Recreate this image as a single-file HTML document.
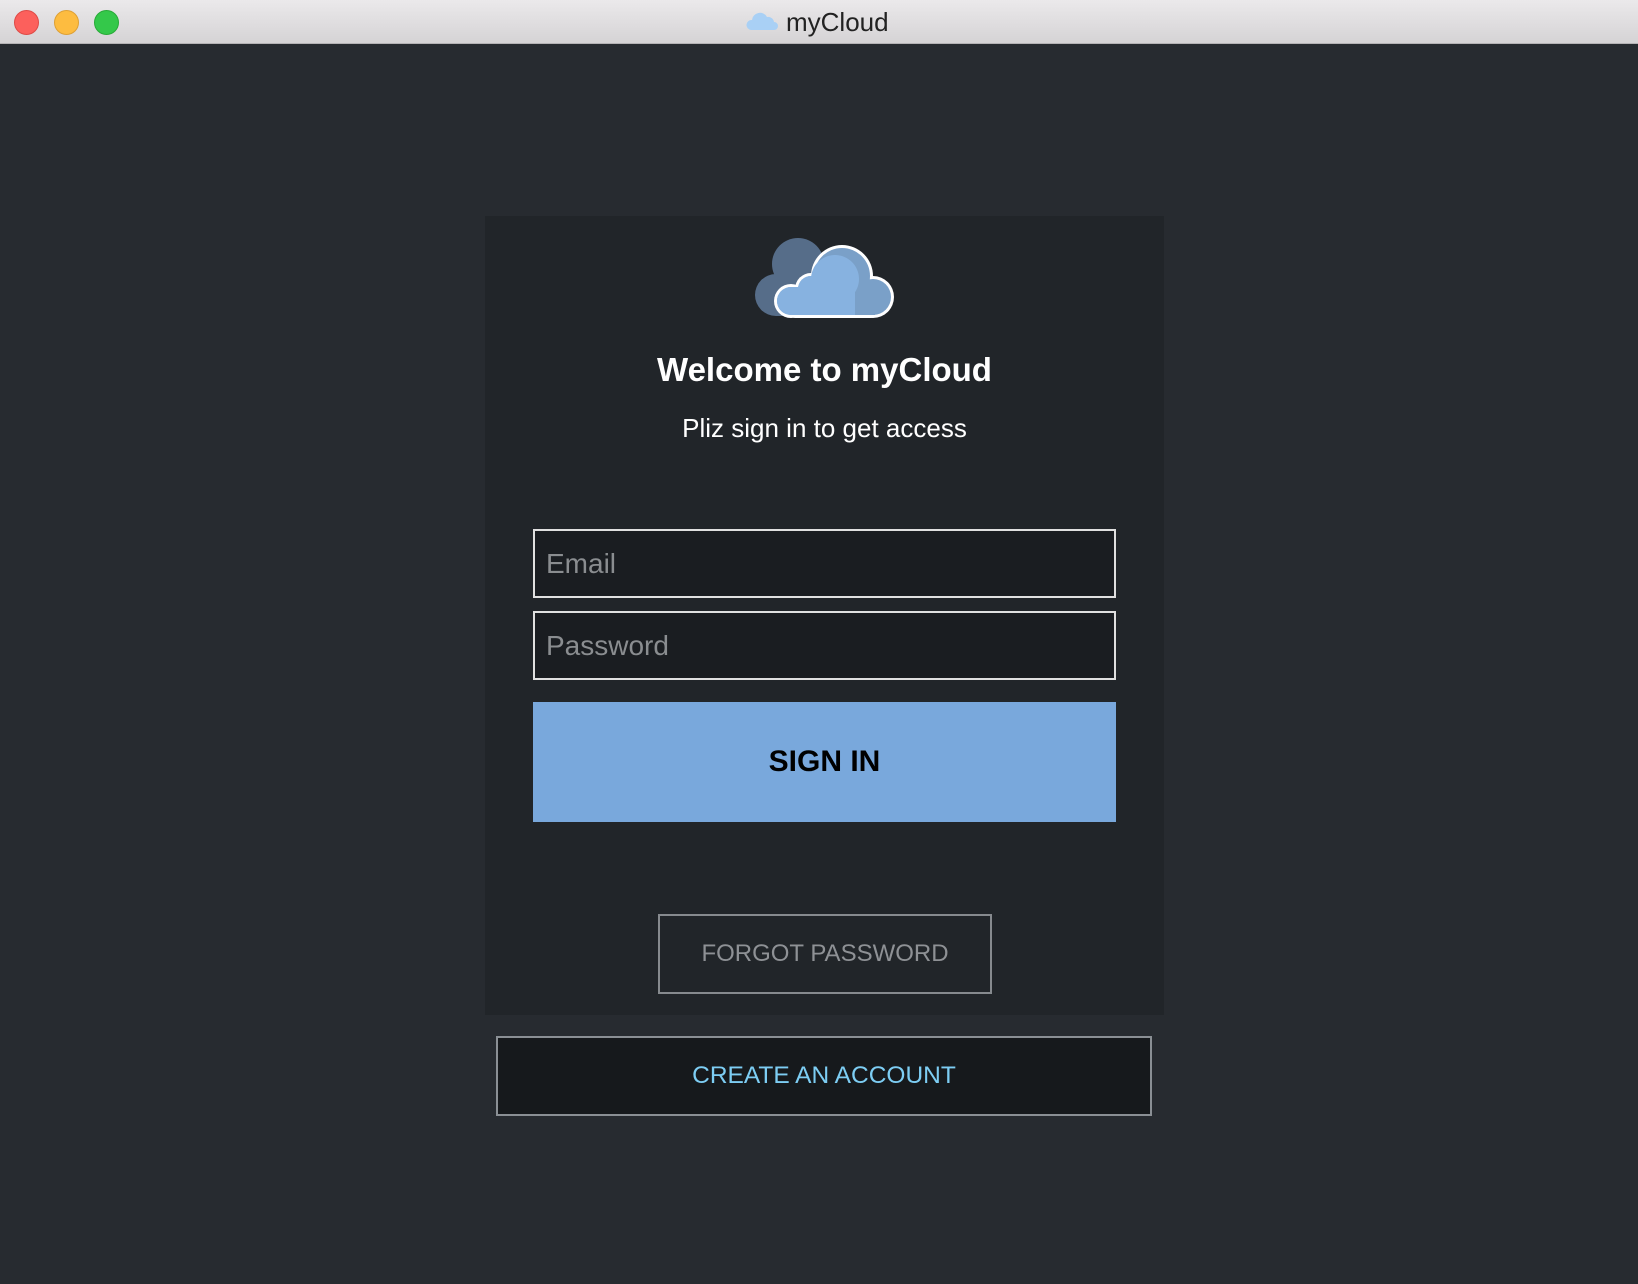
<!DOCTYPE html>
<html><head><meta charset="utf-8"><style>
*{margin:0;padding:0;box-sizing:border-box}
body{width:1638px;height:1284px;background:#272b30;font-family:"Liberation Sans",sans-serif;position:relative;overflow:hidden}
.tb{position:absolute;left:0;top:0;width:1638px;height:44px;background:linear-gradient(#ebe9eb,#d5d3d5);border-bottom:1px solid #b5b3b5}
.dot{position:absolute;top:10px;width:25px;height:25px;border-radius:50%}
.tt{position:absolute;left:786px;top:7px;font-size:26px;color:#222}
.card{position:absolute;left:485px;top:216px;width:679px;height:799px;background:#212529}
.abs{position:absolute}
.inp{position:absolute;left:533px;width:583px;background:#1a1d21;border:2px solid #e0e0e0;color:#8a8d90;font-size:28px;padding-left:11px;display:flex;align-items:center}
</style></head><body>
<div class="tb">
<div class="dot" style="left:14px;background:#fc605c;border:1px solid #de4a46"></div>
<div class="dot" style="left:54px;background:#fdbc40;border:1px solid #dea034"></div>
<div class="dot" style="left:94px;background:#34c84a;border:1px solid #27aa37"></div>
<svg class="abs" style="left:746px;top:10px" width="34" height="22" viewBox="0 0 34 22"><path d="M5 20a5 5 0 0 1 1-10a8 8 0 0 1 15-3a6 6 0 0 1 7 5a4 4 0 0 1 0 8z" fill="#a9d0f5"/></svg>
<div class="tt">myCloud</div>
</div>
<div class="card"></div>
<svg class="abs" style="left:755px;top:237px" width="140" height="82" viewBox="0 0 140 82">
<g fill="#566d89">
<circle cx="43" cy="27" r="26"/><circle cx="21" cy="58" r="21"/><rect x="21" y="30" width="40" height="49"/>
</g>
<g fill="#fff">
<circle cx="87" cy="39" r="31"/><circle cx="118" cy="60" r="21"/><circle cx="36" cy="64" r="17"/><circle cx="56" cy="52" r="16"/><rect x="36" y="50" width="84" height="31" rx="4"/>
</g>
<g fill="#7aa0c8">
<circle cx="87" cy="39" r="28"/><circle cx="118" cy="60" r="18"/><circle cx="36" cy="64" r="14"/><circle cx="56" cy="52" r="13"/><rect x="36" y="50" width="84" height="28"/>
</g>
<g fill="#87b2e0">
<circle cx="80" cy="42" r="24" /><circle cx="36" cy="64" r="14"/><circle cx="56" cy="52" r="13"/><rect x="36" y="50" width="64" height="28"/>
</g>
</svg>
<div class="abs" style="left:485px;width:679px;top:351px;text-align:center;color:#fff;font-weight:bold;font-size:33px">Welcome to myCloud</div>
<div class="abs" style="left:485px;width:679px;top:413px;text-align:center;color:#fff;font-size:26px">Pliz sign in to get access</div>
<div class="inp" style="top:529px;height:69px">Email</div>
<div class="inp" style="top:611px;height:69px">Password</div>
<div class="abs" style="left:533px;top:702px;width:583px;height:120px;background:#79a8dc;display:flex;align-items:center;justify-content:center;font-weight:bold;font-size:30px;color:#000">SIGN IN</div>
<div class="abs" style="left:658px;top:914px;width:334px;height:80px;border:2px solid #868a8e;display:flex;align-items:center;justify-content:center;font-size:24px;color:#8e9195">FORGOT PASSWORD</div>
<div class="abs" style="left:496px;top:1036px;width:656px;height:80px;background:#16191c;border:2px solid #8a8f94;display:flex;align-items:center;justify-content:center;font-size:24.5px;color:#7dcdf3">CREATE AN ACCOUNT</div>
</body></html>
